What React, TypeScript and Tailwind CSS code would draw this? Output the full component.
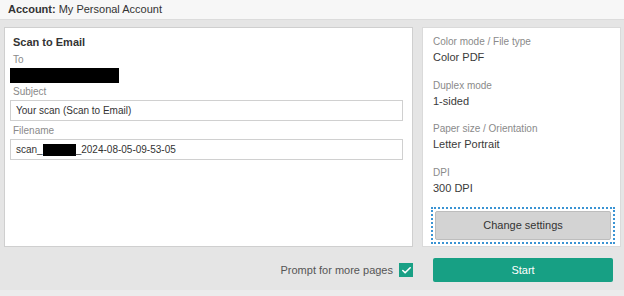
import { Check } from "lucide-react";

function Field({ label, value }: { label: string; value: string }) {
    return (
        <div className="mb-[15.5px] last:mb-0">
            <div className="text-[10px] leading-[12px] text-[#8a8a8a]">{label}</div>
            <div className="mt-[2px] text-[11px] leading-[14px] text-[#3a3a3a]">{value}</div>
        </div>
    );
}

export default function App() {
    return (
        <div
            className="w-[624px] h-[296px] bg-[#e5e5e5] flex flex-col overflow-hidden"
            style={{ fontFamily: '"Liberation Sans", Arial, sans-serif' }}
        >
            {/* Account header */}
            <div className="h-[20px] bg-[#f7f7f7] border-b border-[#dcdcdc] px-[8px] flex items-center text-[11px] text-[#333]">
                <span className="font-bold">Account:</span>
                <span className="ml-[3px]">My Personal Account</span>
            </div>

            <div className="flex mt-[7px] ml-[4px] gap-[9px] h-[220px]">
                {/* Scan to Email card */}
                <div className="w-[409px] bg-white border border-[#cfcfcf] pt-[7px] px-[5px]">
                    <div className="ml-[3px] text-[11px] leading-[14px] font-bold text-[#333]">Scan to Email</div>
                    <div className="ml-[3px] mt-[5px] text-[10px] leading-[12px] text-[#8a8a8a]">To</div>
                    <div className="mt-[2px] w-[109px] h-[15px] bg-black" />
                    <div className="ml-[3px] mt-[3px] text-[10px] leading-[12px] text-[#8a8a8a]">Subject</div>
                    <div className="mt-[2px] w-[393px] h-[21px] border border-[#d0d0d0] px-[5px] flex items-center text-[10px] text-[#333]">
                        Your scan (Scan to Email)
                    </div>
                    <div className="ml-[3px] mt-[4px] text-[10px] leading-[12px] text-[#8a8a8a]">Filename</div>
                    <div className="mt-[2px] w-[393px] h-[21px] border border-[#d0d0d0] px-[5px] flex items-center text-[10px] text-[#333]">
                        <span>scan_</span>
                        <span className="inline-block w-[33px] h-[12px] bg-black" />
                        <span>_2024-08-05-09-53-05</span>
                    </div>
                </div>

                {/* Settings card */}
                <div className="w-[199px] bg-white border border-[#dadada] pt-[8px] px-[8px] pb-[2px] flex flex-col">
                    <div className="px-[2px]">
                        <Field label="Color mode / File type" value="Color PDF" />
                        <Field label="Duplex mode" value="1-sided" />
                        <Field label="Paper size / Orientation" value="Letter Portrait" />
                        <Field label="DPI" value="300 DPI" />
                    </div>
                    <div className="mt-auto w-[184px] h-[37px] border-2 border-dotted border-[#3a93d3] p-[2px]">
                        <button className="w-full h-full bg-[#d3d3d3] border border-[#bdbdbd] rounded-[2px] text-[11px] text-[#333]">
                            Change settings
                        </button>
                    </div>
                </div>
            </div>

            {/* Bottom actions */}
            <div className="flex items-center h-[43px] pt-[3px]">
                <div className="w-[413px] flex items-center justify-end">
                    <span className="text-[11px] text-[#555] mr-[6px]">Prompt for more pages</span>
                    <span className="w-[14px] h-[14px] bg-[#19a085] flex items-center justify-center">
                        <Check className="w-[11px] h-[11px] text-white" strokeWidth={3.5} />
                    </span>
                </div>
                <button className="ml-[20px] w-[180px] h-[24px] bg-[#17a084] rounded-[2px] text-[11px] text-white">
                    Start
                </button>
            </div>
            <div className="flex-1 bg-[#ececec]" />
        </div>
    );
}
